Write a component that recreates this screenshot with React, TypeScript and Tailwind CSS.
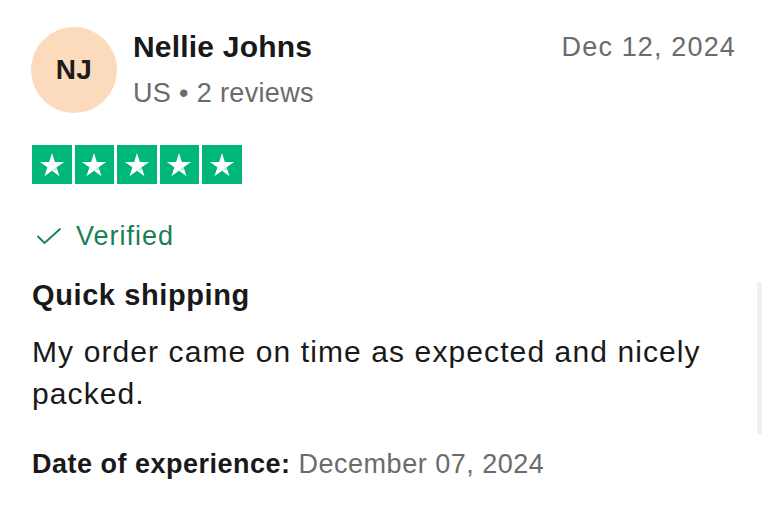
const font = { fontFamily: '"Liberation Sans", Arial, Helvetica, sans-serif' };

const Star = () => (
  <div className="flex h-[39px] w-[39.5px] items-center justify-center bg-[#00b67a]">
    <svg width="28" height="28" viewBox="0 0 24 24">
      <path
        d="M12 1.8l2.45 7.55h7.95l-6.43 4.67 2.46 7.56L12 16.9l-6.43 4.68 2.46-7.56L1.6 9.35h7.95z"
        fill="#ffffff"
      />
      <path d="M15.97 14.02l.7 2.15L12 16.9z" fill="#00b67a" opacity="0.35" />
    </svg>
  </div>
);

export default function App() {
  return (
    <div className="relative h-[513px] w-[768px] overflow-hidden bg-white" style={font}>
      <div className="px-[32px] pt-[27px]">
        <div className="flex items-start">
          <div className="-ml-[1px] flex h-[86px] w-[86px] shrink-0 items-center justify-center rounded-full bg-[#fcdbbd]">
            <span className="text-[28px] font-bold tracking-[0.3px] text-[#1c1c1c]">NJ</span>
          </div>
          <div className="ml-[16px] flex-1 pt-[3px]">
            <div className="text-[30px] font-bold leading-[34px] tracking-[0.2px] text-[#191919]">
              Nellie Johns
            </div>
            <div className="mt-[14px] text-[27px] leading-[30px] tracking-[0.35px] text-[#6b6b6b]">
              US • 2 reviews
            </div>
          </div>
          <div className="pt-[5px] text-[27px] leading-[30px] tracking-[1.15px] text-[#6b6b6b]">
            Dec 12, 2024
          </div>
        </div>

        <div className="mt-[32px] flex gap-[3px]">
          <Star />
          <Star />
          <Star />
          <Star />
          <Star />
        </div>

        <div className="mt-[38px] flex items-center gap-[14px] pl-[4px]">
          <svg width="26" height="18" viewBox="0 0 26 18" fill="none">
            <path d="M2 9.5l6.5 6.5L24 2" stroke="#1a7f55" strokeWidth="1.8" strokeLinecap="round" strokeLinejoin="round" />
          </svg>
          <span className="text-[27px] leading-[28px] tracking-[1px] text-[#1a7f55]">Verified</span>
        </div>

        <h2 className="mt-[30px] text-[29px] font-bold leading-[30px] tracking-[0.6px] text-[#191919]">
          Quick shipping
        </h2>

        <p className="mt-[21px] text-[30px] leading-[42px] tracking-[1.1px] text-[#191919]">
          My order came on time as expected and nicely packed.
        </p>

        <div className="mt-[34px] text-[27px] leading-[30px]">
          <span className="font-bold tracking-[0.5px] text-[#191919]">Date of experience: </span>
          <span className="tracking-[0.5px] text-[#6b6b6b]">December 07, 2024</span>
        </div>
      </div>

      <div className="absolute right-[6px] top-[282px] h-[152px] w-[5px] rounded-full bg-[#efefef]" />
    </div>
  );
}
